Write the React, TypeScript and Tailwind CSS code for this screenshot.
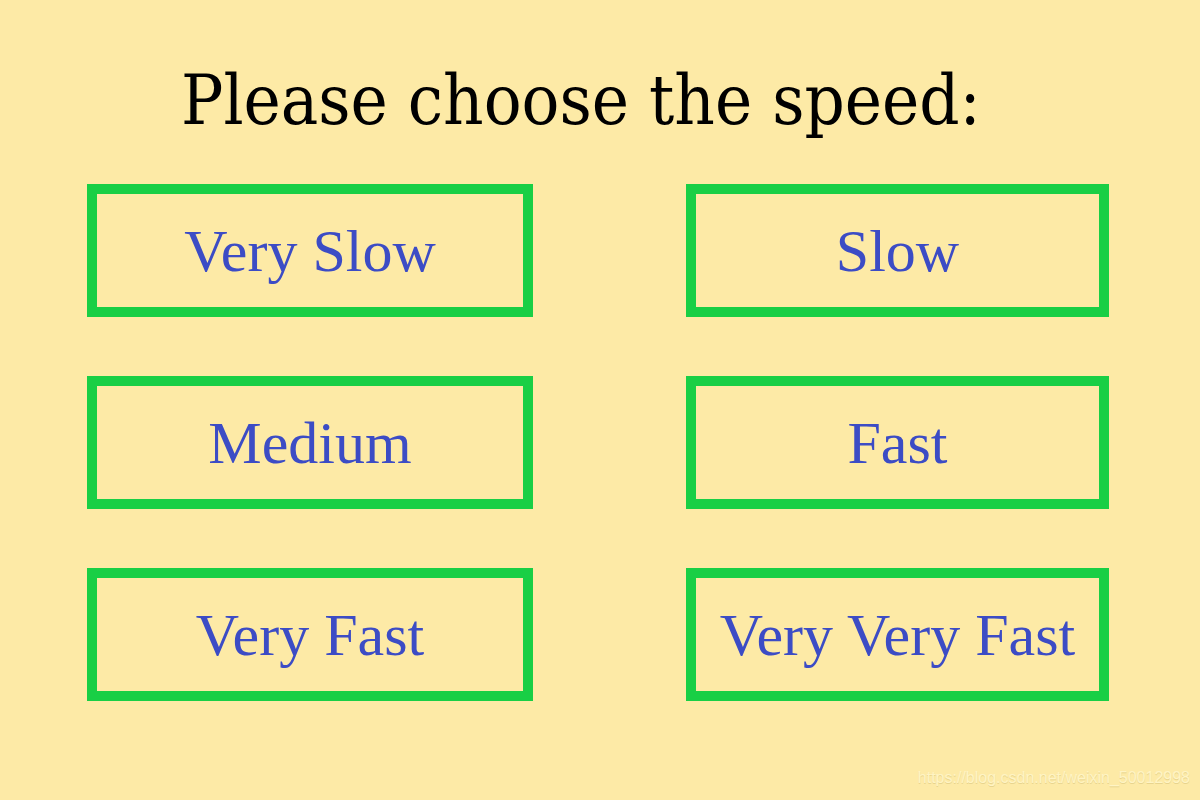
const speeds = [
  { label: "Very Slow", wide: true },
  { label: "Slow", wide: false },
  { label: "Medium", wide: true },
  { label: "Fast", wide: false },
  { label: "Very Fast", wide: true },
  { label: "Very Very Fast", wide: false },
]

function SpeedButton({ label }: { label: string }) {
  return (
    <button className="h-[133px] w-full border-[10px] border-[#19cf45] flex items-center justify-center text-[60px] leading-none text-[#3c4cc5] font-['Liberation_Serif',serif] whitespace-nowrap">
      {label}
    </button>
  )
}

export default function App() {
  return (
    <div className="relative w-[1200px] h-[800px] bg-[#fdeaa6] overflow-hidden">
      <h1 className="pt-[55px] pl-[181px] text-[70px] leading-[90px] text-black font-['DejaVu_Serif',serif] [font-stretch:condensed] whitespace-nowrap">
        Please choose the speed:
      </h1>

      <div className="mt-[39px] ml-[87px] grid grid-cols-[446px_423px] gap-x-[153px] gap-y-[59px]">
        {speeds.map((s) => (
          <SpeedButton key={s.label} label={s.label} />
        ))}
      </div>

      <div className="absolute right-[10px] bottom-[10px] text-[16px] text-[#fff4c4] font-['Liberation_Sans',sans-serif] [text-shadow:0_1px_0_#e8d48e]">
        https://blog.csdn.net/weixin_50012998
      </div>
    </div>
  )
}
